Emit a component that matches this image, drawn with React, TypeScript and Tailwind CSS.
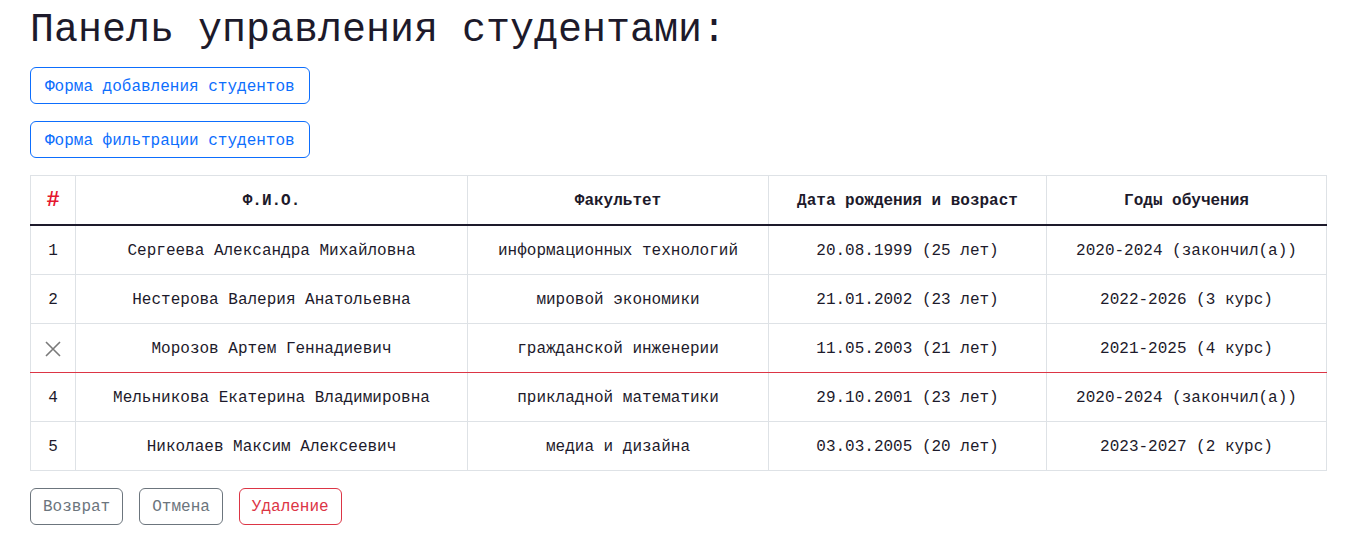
const students = [
  { id: 1, name: 'Сергеева Александра Михайловна', faculty: 'информационных технологий', birth: '20.08.1999 (25 лет)', years: '2020-2024 (закончил(а))' },
  { id: 2, name: 'Нестерова Валерия Анатольевна', faculty: 'мировой экономики', birth: '21.01.2002 (23 лет)', years: '2022-2026 (3 курс)' },
  { id: 3, name: 'Морозов Артем Геннадиевич', faculty: 'гражданской инженерии', birth: '11.05.2003 (21 лет)', years: '2021-2025 (4 курс)', marked: true },
  { id: 4, name: 'Мельникова Екатерина Владимировна', faculty: 'прикладной математики', birth: '29.10.2001 (23 лет)', years: '2020-2024 (закончил(а))' },
  { id: 5, name: 'Николаев Максим Алексеевич', faculty: 'медиа и дизайна', birth: '03.03.2005 (20 лет)', years: '2023-2027 (2 курс)' },
];

const CrossIcon = () => (
  <svg width="18" height="18" viewBox="0 0 18 18" className="mx-auto block">
    <path d="M2 2 L16 16 M16 2 L2 16" stroke="#7a7a7a" strokeWidth="1.6" fill="none" />
  </svg>
);

export default function App() {
  const cell = 'border border-[#dee2e6] pt-[13px] pb-[11px] px-2 text-center leading-6';

  return (
    <div className="min-h-screen bg-white px-[30px] text-[16px] text-[#1d1a2b]" style={{ fontFamily: '"Liberation Mono", "DejaVu Sans Mono", monospace' }}>
      <h1 className="pt-[7px] mb-3 text-[40px] leading-[48px] font-normal">Панель управления студентами:</h1>

      <div className="flex flex-col items-start gap-[17px]">
        <button className="h-[37px] px-[14px] pt-[2px] border border-[#0d6efd] rounded-md text-[#0d6efd] leading-6">
          Форма добавления студентов
        </button>
        <button className="h-[37px] px-[14px] pt-[2px] border border-[#0d6efd] rounded-md text-[#0d6efd] leading-6">
          Форма фильтрации студентов
        </button>
      </div>

      <table className="mt-[17px] w-[1296px] border-collapse table-fixed">
        <thead>
          <tr>
            <th className={`${cell} w-[45px] font-bold text-[22px] text-[#e5172f] border-b-2 border-b-[#1d1a2b]`}>#</th>
            <th className={`${cell} w-[392px] font-bold border-b-2 border-b-[#1d1a2b]`}>Ф.И.О.</th>
            <th className={`${cell} w-[301px] font-bold border-b-2 border-b-[#1d1a2b]`}>Факультет</th>
            <th className={`${cell} w-[278px] font-bold border-b-2 border-b-[#1d1a2b]`}>Дата рождения и возраст</th>
            <th className={`${cell} w-[280px] font-bold border-b-2 border-b-[#1d1a2b]`}>Годы обучения</th>
          </tr>
        </thead>
        <tbody>
          {students.map((s) => {
            const rowCell = s.marked ? `${cell} border-b-[#dc3545]` : cell;
            return (
              <tr key={s.id}>
                <td className={rowCell}>{s.marked ? <CrossIcon /> : s.id}</td>
                <td className={rowCell}>{s.name}</td>
                <td className={rowCell}>{s.faculty}</td>
                <td className={rowCell}>{s.birth}</td>
                <td className={rowCell}>{s.years}</td>
              </tr>
            );
          })}
        </tbody>
      </table>

      <div className="mt-[17px] flex gap-4">
        <button className="h-[37px] px-3 pt-px border border-[#6c757d] rounded-md text-[#6c757d] leading-6">Возврат</button>
        <button className="h-[37px] px-3 pt-px border border-[#6c757d] rounded-md text-[#6c757d] leading-6">Отмена</button>
        <button className="h-[37px] px-3 pt-px border border-[#dc3545] rounded-md text-[#dc3545] leading-6">Удаление</button>
      </div>
    </div>
  );
}
